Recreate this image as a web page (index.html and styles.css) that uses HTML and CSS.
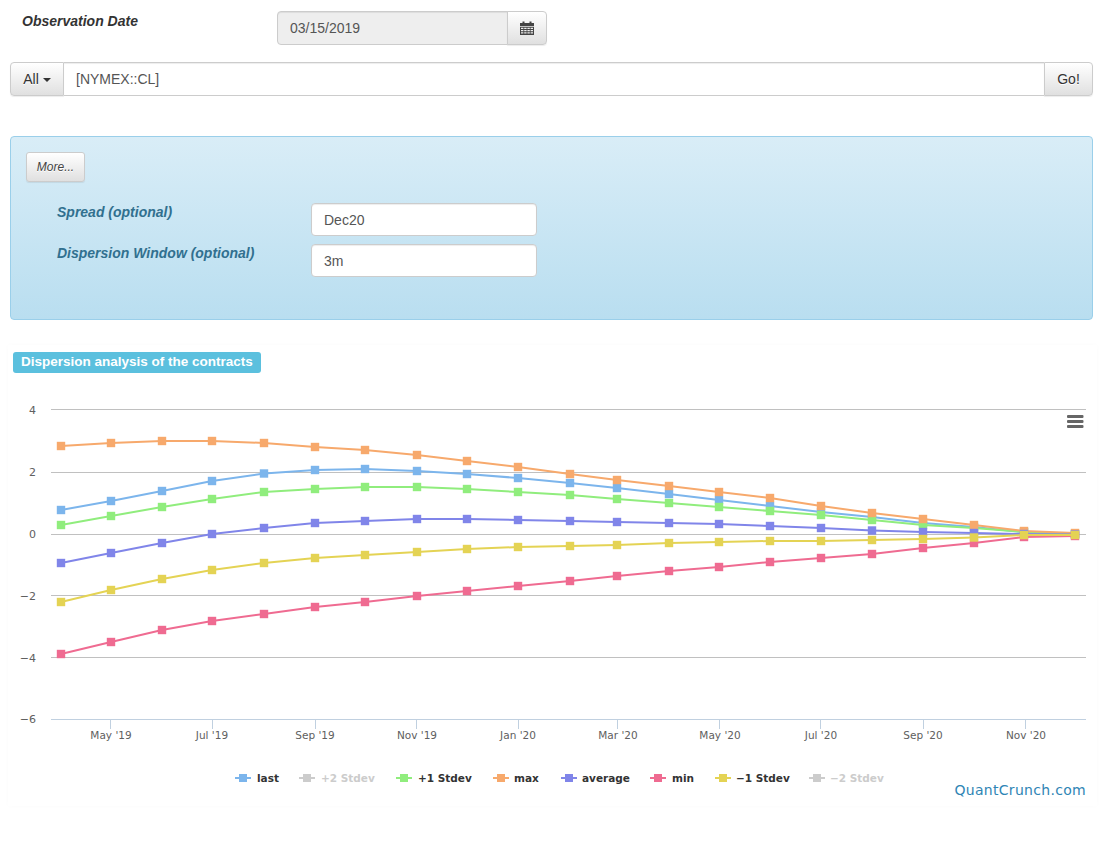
FILE: index.html
```html
<!DOCTYPE html>
<html lang="en">
<head>
<meta charset="utf-8">
<title>Dispersion analysis</title>
<link rel="stylesheet" href="styles.css">
</head>
<body>
<div class="page">
  <div class="date-row">
    <label class="date-label">Observation Date</label>
    <div class="input-group date-group">
      <input class="field field-disabled" type="text" value="03/15/2019" disabled>
      <button class="btn btn-addon-right" type="button" aria-label="Calendar">
        <svg class="cal-icon" width="14" height="14" viewBox="0 0 14 14"><path fill="#444" d="M0 2h2.500V.5h2V2h5V.5h2V2H14v3H0z"/><path fill="#444" fill-rule="evenodd" d="M0 5.800h14V14H0zM1 6.800v1.300h2.400V6.800zM4.200 6.800v1.300h2.400V6.800zM7.400 6.800v1.300h2.400V6.800zM10.600 6.800v1.300H13V6.800zM1 9v1.300h2.400V9zM4.200 9v1.300h2.400V9zM7.400 9v1.300h2.400V9zM10.600 9v1.300H13V9zM1 11.200v1.400h2.400v-1.400zM4.200 11.200v1.400h2.400v-1.400zM7.400 11.200v1.400h2.400v-1.400zM10.600 11.200v1.400H13v-1.400z"/></svg>
      </button>
    </div>
  </div>

  <div class="input-group search-group">
    <button class="btn btn-addon-left" type="button">All <span class="caret"></span></button>
    <input class="field field-main" type="text" value="[NYMEX::CL]">
    <button class="btn btn-addon-right" type="button">Go!</button>
  </div>

  <div class="well">
    <button class="btn btn-more" type="button">More...</button>
    <div class="opt-row">
      <label class="opt-label">Spread (optional)</label>
      <input class="field field-opt" type="text" value="Dec20">
    </div>
    <div class="opt-row opt-row-second">
      <label class="opt-label">Dispersion Window (optional)</label>
      <input class="field field-opt" type="text" value="3m">
    </div>
  </div>

  <div class="chart-panel">
    <span class="badge">Dispersion analysis of the contracts</span>
    <svg class="chart" width="1089" height="426" viewBox="8 380 1089 426" xmlns="http://www.w3.org/2000/svg">
      <defs>
        <marker id="m-last" markerUnits="userSpaceOnUse" markerWidth="10" markerHeight="10" refX="5" refY="5"><rect x=".8" y=".8" width="8.400" height="8.400" fill="#7cb5ec"/></marker>
        <marker id="m-p1" markerUnits="userSpaceOnUse" markerWidth="10" markerHeight="10" refX="5" refY="5"><rect x=".8" y=".8" width="8.400" height="8.400" fill="#90ed7d"/></marker>
        <marker id="m-max" markerUnits="userSpaceOnUse" markerWidth="10" markerHeight="10" refX="5" refY="5"><rect x=".8" y=".8" width="8.400" height="8.400" fill="#f7a96c"/></marker>
        <marker id="m-avg" markerUnits="userSpaceOnUse" markerWidth="10" markerHeight="10" refX="5" refY="5"><rect x=".8" y=".8" width="8.400" height="8.400" fill="#8085e9"/></marker>
        <marker id="m-min" markerUnits="userSpaceOnUse" markerWidth="10" markerHeight="10" refX="5" refY="5"><rect x=".8" y=".8" width="8.400" height="8.400" fill="#ef6b91"/></marker>
        <marker id="m-m1" markerUnits="userSpaceOnUse" markerWidth="10" markerHeight="10" refX="5" refY="5"><rect x=".8" y=".8" width="8.400" height="8.400" fill="#e4d354"/></marker>
      </defs>

      <g class="grid">
        <line x1="51" x2="1086" y1="409.500" y2="409.500"/>
        <line x1="51" x2="1086" y1="472.500" y2="472.500"/>
        <line x1="51" x2="1086" y1="534.500" y2="534.500"/>
        <line x1="51" x2="1086" y1="595.500" y2="595.500"/>
        <line x1="51" x2="1086" y1="657.500" y2="657.500"/>
      </g>
      <g class="xaxis">
        <line x1="51" x2="1086" y1="719.500" y2="719.500"/>
        <line x1="110.500" x2="110.500" y1="720" y2="729"/>
        <line x1="212.500" x2="212.500" y1="720" y2="729"/>
        <line x1="315.500" x2="315.500" y1="720" y2="729"/>
        <line x1="416.500" x2="416.500" y1="720" y2="729"/>
        <line x1="518.500" x2="518.500" y1="720" y2="729"/>
        <line x1="617.500" x2="617.500" y1="720" y2="729"/>
        <line x1="719.500" x2="719.500" y1="720" y2="729"/>
        <line x1="820.500" x2="820.500" y1="720" y2="729"/>
        <line x1="923.500" x2="923.500" y1="720" y2="729"/>
        <line x1="1025.500" x2="1025.500" y1="720" y2="729"/>
      </g>

      <g class="ylabels">
        <text x="36" y="414">4</text>
        <text x="36" y="476">2</text>
        <text x="36" y="538">0</text>
        <text x="36" y="600">−2</text>
        <text x="36" y="662">−4</text>
        <text x="36" y="723">−6</text>
      </g>
      <g class="xlabels">
        <text x="111" y="739">May '19</text>
        <text x="212" y="739">Jul '19</text>
        <text x="315" y="739">Sep '19</text>
        <text x="417" y="739">Nov '19</text>
        <text x="518" y="739">Jan '20</text>
        <text x="618" y="739">Mar '20</text>
        <text x="720" y="739">May '20</text>
        <text x="821" y="739">Jul '20</text>
        <text x="923" y="739">Sep '20</text>
        <text x="1026" y="739">Nov '20</text>
      </g>

      <polyline class="s s-last" points="61,510 111,501 162,491 212,481 264,473.500 315,470 365,469 417,471 467,474 518,478 570,483 617,488 669,494 719,500 770,506 821,512 872,517 923,523 974,527 1024,532 1075,534"/>
      <polyline class="s s-p1" points="61,525 111,516 162,507 212,499 264,492 315,489 365,487 417,487 467,489 518,492 570,495 617,499 669,503 719,507 770,511 821,515 872,520 923,525 974,528 1024,532 1075,534"/>
      <polyline class="s s-max" points="61,446 111,443 162,441 212,441 264,443 315,447 365,450 417,455 467,461 518,467 570,474 617,480 669,486 719,492 770,498 821,506 872,513 923,519 974,525 1024,531 1075,533"/>
      <polyline class="s s-avg" points="61,563 111,553 162,543 212,534 264,528 315,523 365,521 417,519 467,519 518,520 570,521 617,522 669,523 719,524 770,526 821,528 872,530.500 923,532 974,533 1024,534 1075,534.500"/>
      <polyline class="s s-min" points="61,654 111,642 162,630 212,621 264,614 315,607 365,602 417,596 467,591 518,586 570,581 617,576 669,571 719,567 770,562 821,558 872,554 923,548 974,543 1024,537 1075,536"/>
      <polyline class="s s-m1" points="61,602 111,590 162,579 212,570 264,563 315,558 365,555 417,552 467,549 518,547 570,546 617,545 669,543 719,542 770,541 821,541 872,540 923,539 974,537.500 1024,535 1075,535"/>

      <g class="menu">
        <rect x="1067" y="415" width="16.500" height="3" rx="1"/>
        <rect x="1067" y="420" width="16.500" height="3" rx="1"/>
        <rect x="1067" y="425" width="16.500" height="3" rx="1"/>
      </g>

      <g class="legend">
        <g><line class="k" x1="235" x2="251" y1="778" y2="778" stroke="#7cb5ec"/><rect x="239" y="774" width="8" height="8" fill="#7cb5ec"/><text x="257" y="782">last</text></g>
        <g class="off"><line class="k" x1="299" x2="315" y1="778" y2="778" stroke="#ccc"/><rect x="303" y="774" width="8" height="8" fill="#ccc"/><text x="321" y="782">+2 Stdev</text></g>
        <g><line class="k" x1="396" x2="412" y1="778" y2="778" stroke="#90ed7d"/><rect x="400" y="774" width="8" height="8" fill="#90ed7d"/><text x="418" y="782">+1 Stdev</text></g>
        <g><line class="k" x1="493" x2="509" y1="778" y2="778" stroke="#f7a96c"/><rect x="497" y="774" width="8" height="8" fill="#f7a96c"/><text x="514" y="782">max</text></g>
        <g><line class="k" x1="561" x2="577" y1="778" y2="778" stroke="#8085e9"/><rect x="565" y="774" width="8" height="8" fill="#8085e9"/><text x="582" y="782">average</text></g>
        <g><line class="k" x1="650" x2="666" y1="778" y2="778" stroke="#ef6b91"/><rect x="654" y="774" width="8" height="8" fill="#ef6b91"/><text x="672" y="782">min</text></g>
        <g><line class="k" x1="715" x2="731" y1="778" y2="778" stroke="#e4d354"/><rect x="719" y="774" width="8" height="8" fill="#e4d354"/><text x="736" y="782">−1 Stdev</text></g>
        <g class="off"><line class="k" x1="809" x2="825" y1="778" y2="778" stroke="#ccc"/><rect x="813" y="774" width="8" height="8" fill="#ccc"/><text x="830" y="782">−2 Stdev</text></g>
      </g>
      <text class="credit" x="1086" y="795">QuantCrunch.com</text>
    </svg>
  </div>
</div>
</body>
</html>
```
FILE: styles.css
```css
* { box-sizing: border-box; }
html, body { margin: 0; padding: 0; background: #fff; }
body { font-family: "Liberation Sans", Arial, sans-serif; font-size: 14px; line-height: 20px; color: #333; }

.page { padding: 11px 10px 0; width: 1103px; height: 856px; overflow: hidden; }

.date-row { display: flex; height: 34px; }
.date-label { width: 267px; padding-left: 12px; font-weight: bold; font-style: italic; }
.date-group { width: 270px; }

.input-group { display: flex; }
.search-group { margin-top: 17px; width: 1083px; }

.field { height: 34px; padding: 6px 12px; font: 14px/20px "Liberation Sans", Arial, sans-serif; color: #555; background: #fff; border: 1px solid #ccc; border-radius: 4px; box-shadow: inset 0 1px 1px rgba(0,0,0,.075); outline: 0; }
.field-disabled { flex: 1; min-width: 0; background: #eee; border-radius: 4px 0 0 4px; opacity: 1; -webkit-text-fill-color: #555; }
.field-main { flex: 1; min-width: 0; border-radius: 0; border-left: 0; border-right: 0; }

.btn { height: 34px; padding: 6px 12px; font: 14px/20px "Liberation Sans", Arial, sans-serif; color: #333; text-shadow: 0 1px 0 #fff; background: linear-gradient(to bottom, #fff 0, #e0e0e0 100%); border: 1px solid #ccc; border-radius: 4px; box-shadow: inset 0 1px 0 rgba(255,255,255,.15), 0 1px 1px rgba(0,0,0,.075); }
.btn-addon-right { border-radius: 0 4px 4px 0; margin-left: -1px; }
.btn-addon-left { width: 54px; border-radius: 4px 0 0 4px; padding: 6px 0; }
.date-group .btn-addon-right { width: 40px; padding: 0; display: flex; align-items: center; justify-content: center; }
.search-group .btn-addon-right { width: 49px; padding: 6px 0; margin-left: 0; }
.cal-icon { display: block; }
.caret { display: inline-block; width: 0; height: 0; margin-left: 0; vertical-align: middle; border-top: 4px solid #333; border-right: 4px solid transparent; border-left: 4px solid transparent; }

.well { margin-top: 40px; width: 1083px; height: 184px; padding: 15px; border: 1px solid #9acfea; border-radius: 4px; background: linear-gradient(to bottom, #d9edf7 0, #b9def0 100%); }
.btn-more { display: block; width: 59px; height: 30px; padding: 0; font-size: 12px; font-style: italic; color: #444; border-radius: 3px; }
.opt-row { display: flex; margin-top: 21px; padding-left: 31px; height: 33px; }
.opt-row-second { margin-top: 8px; }
.opt-label { width: 254px; margin-top: -1px; color: #31708f; font-weight: bold; font-style: italic; }
.field-opt { width: 226px; height: 33px; }

.chart-panel { margin: 25px 0 0 -2px; width: 1089px; height: 461px; background: #fff; box-shadow: 0 0 5px rgba(0,0,0,.02); }
.badge { display: inline-block; margin: 7px 0 0 5px; height: 21px; width: 248px; padding: 0 8px; font-size: 13.500px; line-height: 19px; font-weight: bold; color: #fff; white-space: nowrap; background: #5bc0de; border-radius: 3px; }
.chart { display: block; margin-top: 7px; overflow: visible; }

.grid line { stroke: #c0c0c0; stroke-width: 1; }
.xaxis line { stroke: #c0d0e0; stroke-width: 1; }
.ylabels text { font: 11px "DejaVu Sans", sans-serif; fill: #606060; text-anchor: end; }
.xlabels text { font: 10.500px "DejaVu Sans", sans-serif; fill: #606060; text-anchor: middle; }

.s { fill: none; stroke-width: 2; stroke-linejoin: round; }
.s-last { stroke: #7cb5ec; marker: url(#m-last); }
.s-p1 { stroke: #90ed7d; marker: url(#m-p1); }
.s-max { stroke: #f7a96c; marker: url(#m-max); }
.s-avg { stroke: #8085e9; marker: url(#m-avg); }
.s-min { stroke: #ef6b91; marker: url(#m-min); }
.s-m1 { stroke: #e4d354; marker: url(#m-m1); }

.menu rect { fill: #666; }
.legend text { font: bold 10.500px "DejaVu Sans", sans-serif; fill: #333; }
.legend .k { stroke-width: 2; }
.legend .off text { fill: #ccc; }
.credit { font: 14px "DejaVu Sans", sans-serif; fill: #2f85b5; text-anchor: end; letter-spacing: .3px; }
```
